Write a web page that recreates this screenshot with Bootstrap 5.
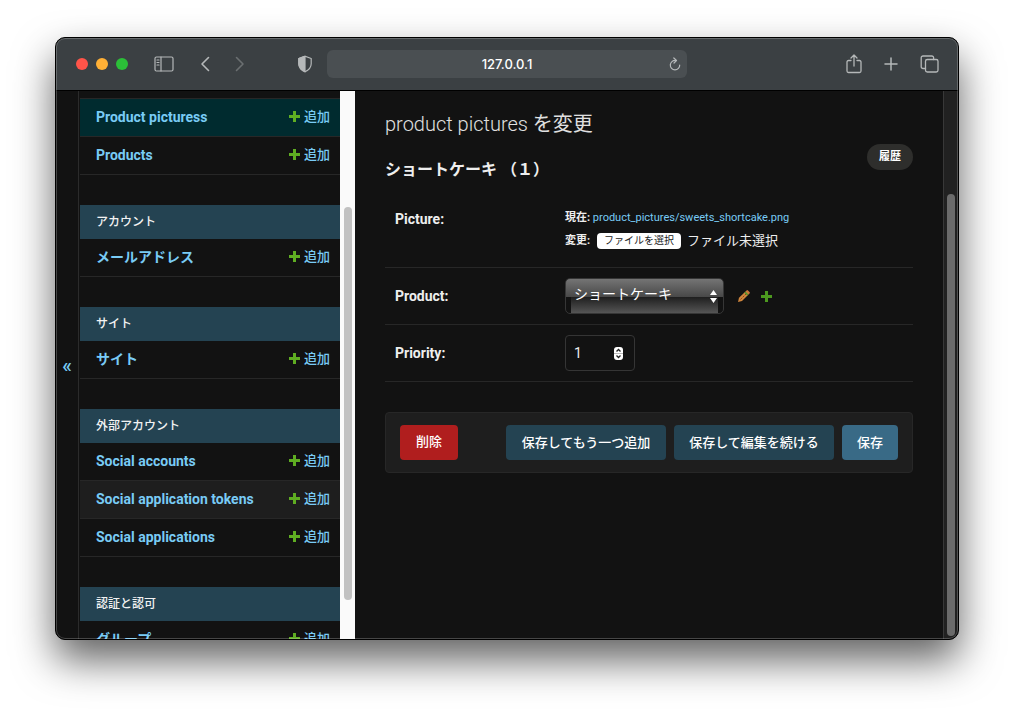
<!DOCTYPE html>
<html lang="ja" data-bs-theme="dark">
<head>
<meta charset="utf-8">
<meta name="viewport" content="width=device-width, initial-scale=1">
<title>product pictures を変更</title>
<link href="https://cdn.jsdelivr.net/npm/bootstrap@5.3.0/dist/css/bootstrap.min.css" rel="stylesheet">
<style>
  body { background: #fff; font-family: Roboto, "Noto Sans CJK JP", sans-serif; font-size: 13px; line-height: 18px; color: #eee; padding: 37px 55px 73px; }
  a { color: #79cbf5; text-decoration: none; }
  .browser { background: #121212; border: 1px solid #000; border-radius: 10px; box-shadow: 0 20px 40px rgba(0,0,0,.62); position: relative; }
  .browser::after { content: ""; position: absolute; inset: 0; border: 1px solid rgba(255,255,255,.22); border-radius: 9px; pointer-events: none; }
  .toolbar { height: 53px; background: #3b4043; border-bottom: 1px solid #000; }
  .toolbar button { background: none; border: 0; padding: 0; color: #b5b8b9; display: flex; }
  .toolbar svg { fill: none; stroke: currentColor; stroke-linecap: round; stroke-linejoin: round; }
  .tool-left { width: 30%; padding: 0 14px 0 20px; }
  .tool-right { width: 30%; padding-right: 19px; gap: 22px; }
  .light { width: 12px; height: 12px; border-radius: 50%; }
  .close-light { background: #ff5449; }
  .min-light { background: #ffb036; }
  .max-light { background: #2bbf38; }
  .panel-btn { margin-left: 26px; }
  .back-btn { margin-left: 25px; }
  .toolbar .fwd-btn { margin-left: 23px; color: #6b6f71; }
  .address { width: 40%; height: 28px; background: #4a4f52; border-radius: 6px; position: relative; }
  .address input { width: 100%; height: 28px; background: none; border: 0; color: #fff; text-align: center; font: 500 13px/28px Inter, sans-serif; }
  .address button { position: absolute; right: 6px; top: 7px; }
  .toggle { width: 23px; background: #121212; border: 0; border-right: 1px solid #2b2b2b; color: #79cbf5; font-size: 20px; font-weight: 500; padding: 0; line-height: 20px; }
  .side { width: 276px; min-width: 276px; padding-left: 1px; }
  .side-list { padding-top: 7px; min-width: 0; }
  .side table { width: 100%; margin-bottom: 30px; border-collapse: separate; border-spacing: 0; }
  .side caption { caption-side: top; background: #244352; color: #f2f2f2; height: 34px; padding: 8px 16px; font-size: 12px; font-weight: 500; line-height: 18px; }
  .side th, .side td { height: 38px; padding: 0 10px 2px 16px; border-bottom: 1px solid #272727; font-size: 14px; line-height: 20px; }
  .side th { font-weight: 700; }
  .side td { padding-left: 0; text-align: right; font-size: 13px; font-weight: 500; white-space: nowrap; }
  .side .current { background: #002b2f; }
  .side .striped { background: #1e1e1e; }
  .side .current > * { height: 39px; border-top: 1px solid #272727; }
  .plus { width: 11px; height: 11px; fill: #5fad22; margin-right: 4px; vertical-align: -1px; }
  .track-light { width: 15px; flex: none; background: #fafafa; padding: 116px 3px 39px 4px; }
  .track-light div { background: #c1c1c1; border-radius: 4px; height: 100%; }
  .track-dark { width: 15px; flex: none; background: #212121; border-left: 1px solid #383838; padding: 103px 3px 3px; }
  .track-dark div { background: #6b6b6b; border-radius: 4px; height: 100%; }
  .page { padding: 20px 30px 0; min-width: 0; }
  h1 { font-size: 20px; font-weight: 300; line-height: 26px; margin: 0 0 7px; color: #e0e0e0; }
  h1 span { font-weight: 400; }
  h2 { font-size: 16px; font-weight: 700; line-height: 24px; margin: 14px 0 0; color: #eee; }
  .pill { background: #2e2e2c; color: #fff; border-radius: 13px; height: 26px; padding: 0 12px; font-size: 11px; font-weight: 700; line-height: 25px; }
  .pill:hover { color: #fff; }
  form { margin-top: 12px; }
  .field { border-bottom: 1px solid #272727; padding: 10px; min-height: 57px; }
  .field > label, .field > .name { width: 170px; font-size: 14px; font-weight: 700; margin: 0; }
  .picture { min-height: 74px; padding-top: 12px; }
  .picture .name { padding-top: 4px; }
  .file-info { font-size: 11px; line-height: 23px; }
  .file-btn { background: #fff; color: #222; border-radius: 4px; font-size: 10px; line-height: 16px; padding: 0 7px; margin: 0 6px 0 7px; }
  .file-none { font-size: 13px; }
  .glossy { width: 159px; height: 36px; appearance: none; border: 1px solid #363636; border-radius: 5px; color: #fff; font-size: 14px; line-height: 20px; padding: 5px 8px 9px;
    background: linear-gradient(#747474, #484848) top / 100% 18px no-repeat, linear-gradient(#1b1b1b, #555) bottom / calc(100% - 10px) 17px no-repeat, #121212; }
  .arrows { position: absolute; right: 7px; top: 12px; pointer-events: none; }
  .number { width: 70px; height: 36px; background: none; border: 1px solid #353535; border-radius: 4px; color: #eee; font-size: 14px; padding: 0 8px; appearance: textfield; }
  .number::-webkit-inner-spin-button { appearance: none; }
  .spin { position: absolute; right: 12px; top: 12px; pointer-events: none; }
  .edit-link { margin: 0 11px 0 13px; }
  .submit-row { margin-top: 30px; background: #1e1e1e; border: 1px solid #272727; border-radius: 4px; padding: 12px 14px; gap: 8px; }
  .submit-row .btn { --bs-btn-color: #fff; --bs-btn-border-width: 0; --bs-btn-border-radius: 4px; --bs-btn-padding-x: 0; --bs-btn-padding-y: 0; height: 35px; font-size: 13px; font-weight: 500; line-height: 34px; flex: 0 1 160px; white-space: nowrap; }
  .submit-row .save { flex-basis: 56px; background: #396a86; }
  .submit-row .del { flex-basis: 58px; background: #b01e1e; }
  .submit-row .more { background: #244352; }
</style>
</head>
<body class="vh-100 d-flex">
<div class="browser flex-fill d-flex flex-column overflow-hidden">
  <header class="toolbar d-flex align-items-center flex-shrink-0">
    <div class="tool-left d-flex align-items-center">
      <div class="d-flex gap-2">
        <span class="light close-light"></span><span class="light min-light"></span><span class="light max-light"></span>
      </div>
      <button aria-label="サイドバー" class="panel-btn"><svg width="20" height="16" stroke-width="1.2"><rect x="1" y="1" width="18" height="14" rx="1.5"/><path d="M7 1v14M3 4h2M3 6.500h2M3 9h2"/></svg></button>
      <button aria-label="戻る" class="back-btn"><svg width="12" height="16" stroke-width="1.6"><path d="M9.500 1.500 3 8l6.500 6.500"/></svg></button>
      <button aria-label="進む" class="fwd-btn"><svg width="12" height="16" stroke-width="1.6"><path d="M2.500 1.500 9 8l-6.500 6.500"/></svg></button>
      <button aria-label="プライバシー" class="ms-auto"><svg width="16" height="18" stroke-width="1.2"><path d="M8 1.200 14.200 3.500v5.200c0 4-3 6.500-6.200 8.100-3.200-1.600-6.200-4.100-6.200-8.100V3.500z"/><path d="M8 1.200v15.600c-3.200-1.600-6.200-4.100-6.200-8.100V3.500z" fill="currentColor"/></svg></button>
    </div>
    <div class="address">
      <input aria-label="アドレス" value="127.0.0.1">
      <button aria-label="再読み込み"><svg width="12" height="14" stroke-width="1.2"><path d="M6.500 3.500A4.700 4.700 0 1 0 10.700 8M4.800 1l2.700 2.500L5 6"/></svg></button>
    </div>
    <div class="tool-right d-flex align-items-center justify-content-end">
      <button aria-label="共有"><svg width="16" height="20" stroke-width="1.3"><path d="M5 6.500H2.500A1.500 1.500 0 0 0 1 8v9a1.500 1.500 0 0 0 1.500 1.500h11A1.500 1.500 0 0 0 15 17V8a1.500 1.500 0 0 0-1.500-1.500H11M8 12V1.200M5 4l3-3 3 3"/></svg></button>
      <button aria-label="新規タブ"><svg width="14" height="14" stroke-width="1.5"><path d="M7 1v12M1 7h12"/></svg></button>
      <button aria-label="タブ一覧"><svg width="19" height="18" stroke-width="1.3"><rect x="5.500" y="4.500" width="12.500" height="12.500" rx="1.8"/><path d="M5.500 13.500H3A1.800 1.800 0 0 1 1.200 11.700V2.800A1.800 1.800 0 0 1 3 1h8.800a1.800 1.800 0 0 1 1.800 1.800v1.700"/></svg></button>
    </div>
  </header>

  <div class="d-flex flex-fill overflow-hidden">
    <button class="toggle flex-shrink-0" aria-label="ナビゲーションを切り替え">«</button>
    <nav class="side d-flex">
      <div class="side-list flex-fill">
        <table>
          <tr class="current"><th><a href="#">Product picturess</a></th><td><a href="#"><svg class="plus" viewBox="0 0 11 11"><path d="M4 0h3v4h4v3H7v4H4V7H0V4h4z"/></svg>追加</a></td></tr>
          <tr><th><a href="#">Products</a></th><td><a href="#"><svg class="plus" viewBox="0 0 11 11"><path d="M4 0h3v4h4v3H7v4H4V7H0V4h4z"/></svg>追加</a></td></tr>
        </table>
        <table>
          <caption>アカウント</caption>
          <tr><th><a href="#">メールアドレス</a></th><td><a href="#"><svg class="plus" viewBox="0 0 11 11"><path d="M4 0h3v4h4v3H7v4H4V7H0V4h4z"/></svg>追加</a></td></tr>
        </table>
        <table>
          <caption>サイト</caption>
          <tr><th><a href="#">サイト</a></th><td><a href="#"><svg class="plus" viewBox="0 0 11 11"><path d="M4 0h3v4h4v3H7v4H4V7H0V4h4z"/></svg>追加</a></td></tr>
        </table>
        <table>
          <caption>外部アカウント</caption>
          <tr><th><a href="#">Social accounts</a></th><td><a href="#"><svg class="plus" viewBox="0 0 11 11"><path d="M4 0h3v4h4v3H7v4H4V7H0V4h4z"/></svg>追加</a></td></tr>
          <tr class="striped"><th><a href="#">Social application tokens</a></th><td><a href="#"><svg class="plus" viewBox="0 0 11 11"><path d="M4 0h3v4h4v3H7v4H4V7H0V4h4z"/></svg>追加</a></td></tr>
          <tr><th><a href="#">Social applications</a></th><td><a href="#"><svg class="plus" viewBox="0 0 11 11"><path d="M4 0h3v4h4v3H7v4H4V7H0V4h4z"/></svg>追加</a></td></tr>
        </table>
        <table>
          <caption>認証と認可</caption>
          <tr><th><a href="#">グループ</a></th><td><a href="#"><svg class="plus" viewBox="0 0 11 11"><path d="M4 0h3v4h4v3H7v4H4V7H0V4h4z"/></svg>追加</a></td></tr>
        </table>
      </div>
      <div class="track-light"><div></div></div>
    </nav>

    <main class="page flex-fill">
      <h1>product pictures <span>を変更</span></h1>
      <div class="d-flex justify-content-between align-items-start">
        <h2>ショートケーキ （１）</h2>
        <a href="#" class="pill">履歴</a>
      </div>
      <form>
        <div class="field picture d-flex align-items-start">
          <div class="name">Picture:</div>
          <div class="file-info">
            <div><b>現在:</b> <a href="#">product_pictures/sweets_shortcake.png</a></div>
            <div class="d-flex align-items-center position-relative"><b>変更:</b><label for="pic" class="file-btn">ファイルを選択</label><input type="file" id="pic" class="visually-hidden"><span class="file-none">ファイル未選択</span></div>
          </div>
        </div>
        <div class="field d-flex align-items-center">
          <label for="product">Product:</label>
          <div class="position-relative">
            <select id="product" class="glossy"><option>ショートケーキ</option></select>
            <svg class="arrows" width="7" height="13" fill="#fff"><path d="M3.500 0 7 5H0zM3.500 13 7 8H0z"/></svg>
          </div>
          <a href="#" class="d-flex edit-link" aria-label="変更"><svg width="13" height="13"><path d="M1 12 2 7.800 8 2l3 3-6 6z" fill="#d0853c"/><path d="M8 2l1.500-1.500a1 1 0 0 1 1.500 0l1.500 1.500a1 1 0 0 1 0 1.500L11 5z" fill="#c9773a"/><path d="M8 2.200 10.800 5" stroke="#4c9a2a" stroke-width="1.5"/><path d="M3.500 9.500 9 4" stroke="#8a4a18" stroke-dasharray="2 1"/></svg></a>
          <a href="#" class="d-flex" aria-label="追加"><svg width="11" height="11" fill="#4c981f"><path d="M4 0h3v4h4v3H7v4H4V7H0V4h4z"/></svg></a>
        </div>
        <div class="field d-flex align-items-center">
          <label for="priority">Priority:</label>
          <div class="position-relative">
            <input type="number" id="priority" class="number" value="1">
            <svg class="spin" width="9" height="13"><rect width="9" height="13" rx="3" fill="#fff"/><path d="M2.500 4.500l2-2 2 2M2.500 8.500l2 2 2-2" fill="none" stroke="#222" stroke-width="1.3"/><path d="M0 6.500h9" stroke="#bbb"/></svg>
          </div>
        </div>
        <div class="submit-row d-flex">
          <a href="#" class="btn del me-auto">削除</a>
          <button type="button" class="btn more">保存してもう一つ追加</button>
          <button type="button" class="btn more">保存して編集を続ける</button>
          <button type="submit" class="btn save">保存</button>
        </div>
      </form>
    </main>
    <div class="track-dark"><div></div></div>
  </div>
</div>
<script src="https://cdn.jsdelivr.net/npm/bootstrap@5.3.0/dist/js/bootstrap.bundle.min.js"></script>
</body>
</html>
